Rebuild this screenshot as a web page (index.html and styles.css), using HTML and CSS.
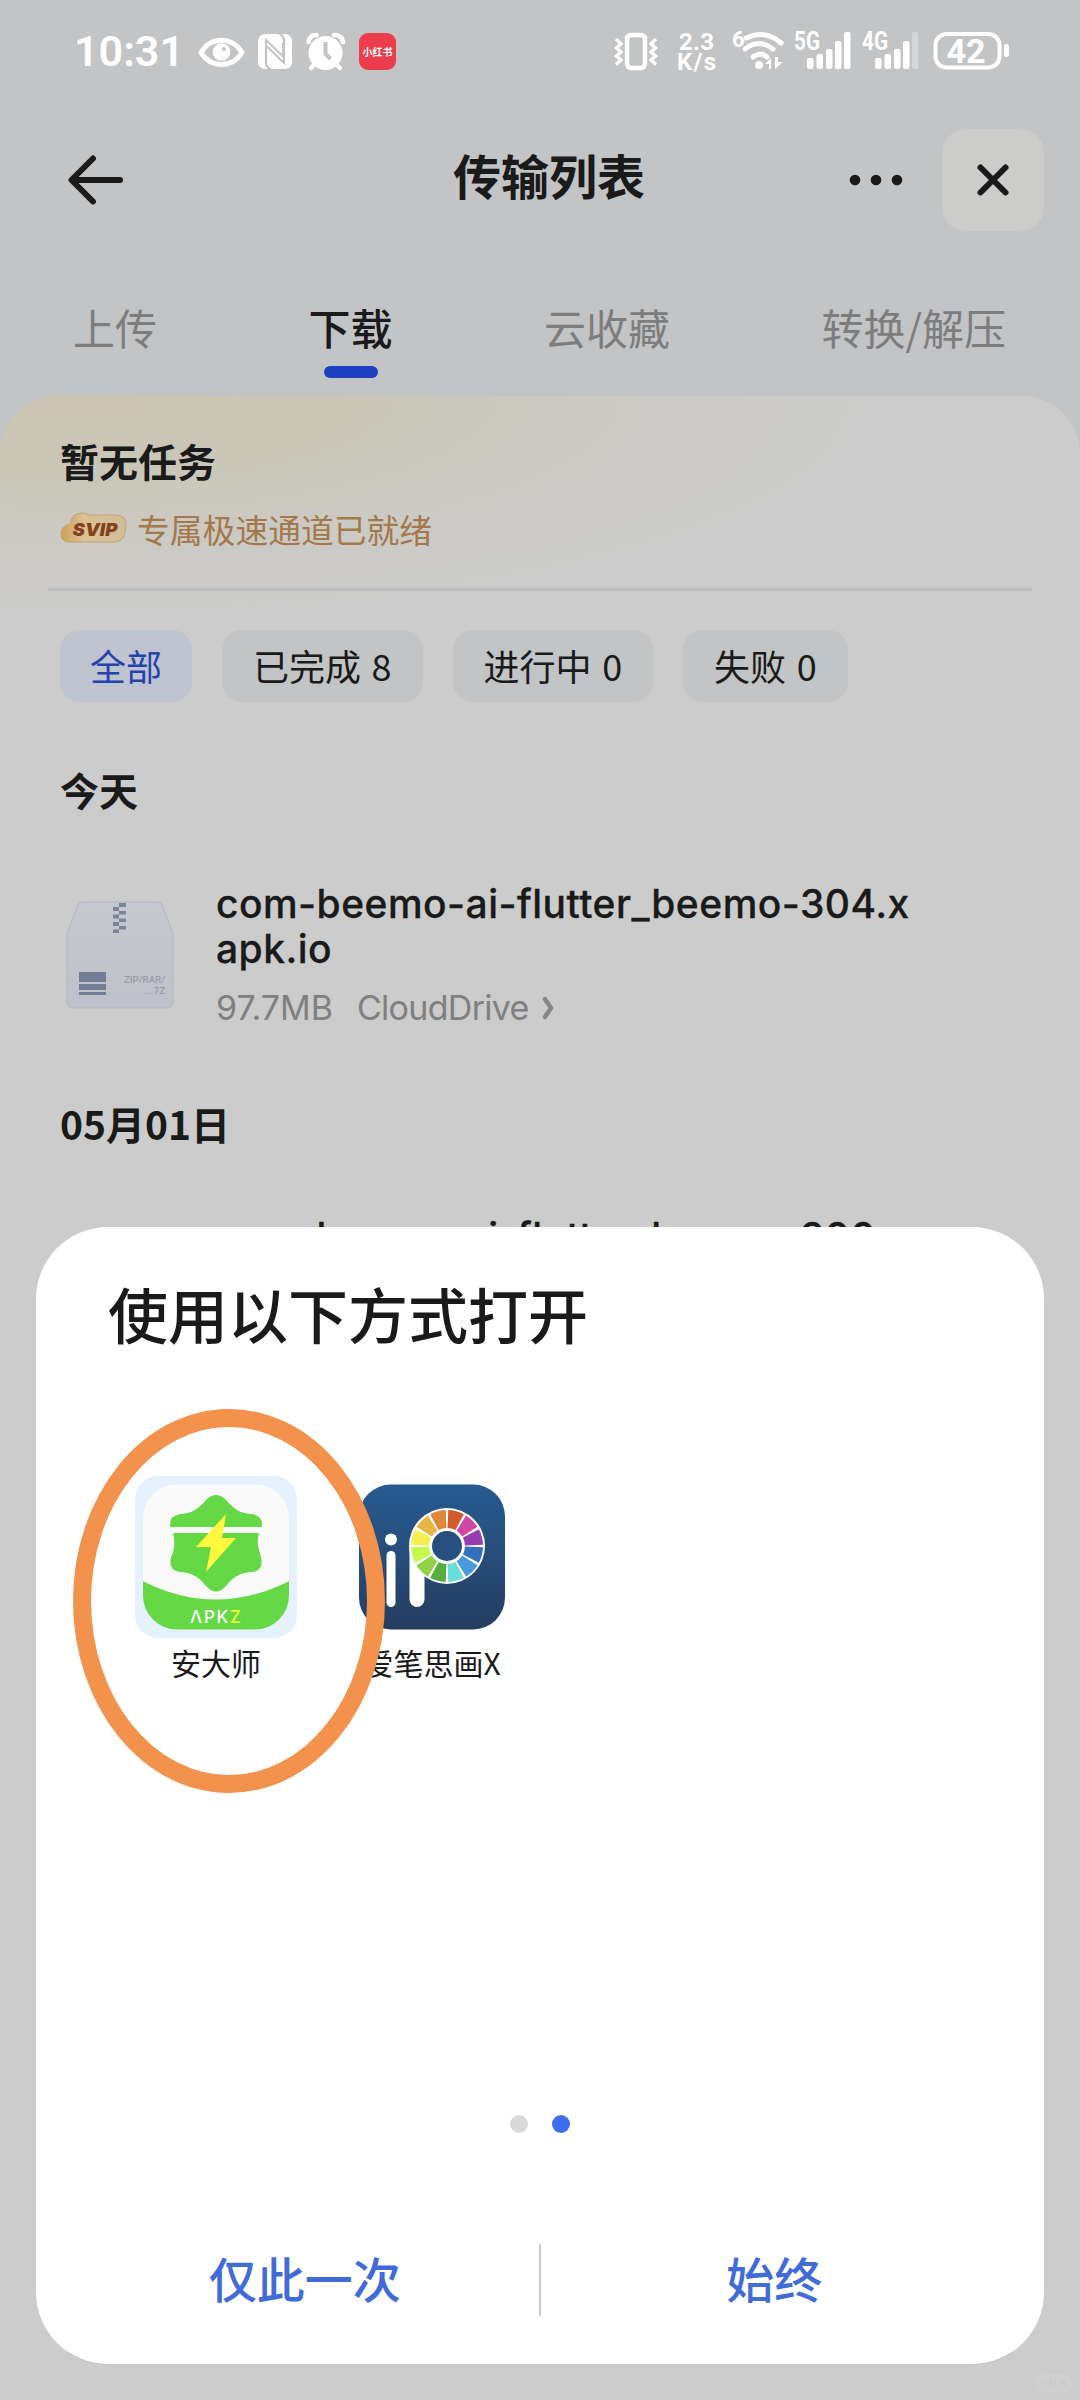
FILE: index.html
```html
<!DOCTYPE html>
<html lang="zh-CN">
<head>
<meta charset="utf-8">
<title>传输列表</title>
<link rel="stylesheet" href="styles.css">
</head>
<body>
<div class="screen">
  <div class="status">
    <span class="time">10:31</span>
    <svg class="status-left" width="200" height="40" viewBox="198 32 200 40">
      <path d="M201 52.500C211 36 232 36 242 52.500C232 68.500 211 68.500 201 52.500Z" fill="none" stroke="#fff" stroke-width="5" stroke-linejoin="round"/>
      <circle cx="221.500" cy="52" r="8.800" fill="#fff"/><circle cx="224" cy="49" r="2" fill="#c3c4c6"/>
      <rect x="258" y="34" width="34" height="35" rx="7" fill="#fff"/>
      <path d="M271 69.500q-5-2-5-7V40l17 16.500V43M279 33.500q5 2 5 7V63L267 46.500" fill="none" stroke="#c3c4c6" stroke-width="2.200"/>
      <circle cx="325.500" cy="53" r="17" fill="#fff"/>
      <path d="M308.500 42q1-7 8-7M334 35q8 0 9 7M315 64l-4 4M336 64l4 4" fill="none" stroke="#fff" stroke-width="4.500" stroke-linecap="round"/>
      <path d="M325.500 42v12l5 5" fill="none" stroke="#c3c4c6" stroke-width="4"/>
      <rect x="359" y="33" width="37" height="37" rx="9" fill="#eb3d4b"/>
      <text x="377.500" y="56" class="xhs">小红书</text>
    </svg>
    <svg class="status-right" width="410" height="44" viewBox="610 28 410 44">
      <g fill="none" stroke="#fff">
        <rect x="627" y="35" width="18" height="33" rx="4" stroke-width="4.500"/>
        <path d="M616 39l5 5-4.500 4 4.500 4-4.500 4 4.500 4-5 4.500M656 39l-5 5 4.500 4-4.500 4 4.500 4-4.500 4 5 4.500" stroke-width="3.500"/>
        <path d="M746 38q19-9 35 5M745 49q14-11 28 0M753 57q8-6 14 0" stroke-width="5" stroke-linecap="round"/>
        <rect x="935.500" y="34" width="64" height="33.500" rx="11" stroke-width="4"/>
      </g>
      <g fill="#fff">
        <text x="696.500" y="50" class="speed" textLength="35">2.3</text><text x="696.500" y="69.500" class="speed" textLength="39">K/s</text>
        <text x="732" y="47" class="gen wifi-gen">6</text>
        <circle cx="759" cy="65" r="4"/>
        <path d="M765 64l6-6v11h-2v-5zM775 57v12l8-7h-5v-5z"/>
        <text x="794" y="50" class="gen" textLength="26" lengthAdjust="spacingAndGlyphs">5G</text>
        <text x="862" y="50" class="gen" textLength="26" lengthAdjust="spacingAndGlyphs">4G</text>
        <rect x="807" y="58" width="6.500" height="11" rx="2"/><rect x="816.500" y="54" width="6.500" height="15" rx="2"/><rect x="826" y="49" width="6.500" height="20" rx="2"/><rect x="835" y="41" width="6.500" height="28" rx="2"/><rect x="844" y="32" width="6.500" height="37" rx="2"/>
        <rect x="875" y="58" width="6.500" height="11" rx="2"/><rect x="884.500" y="54" width="6.500" height="15" rx="2"/><rect x="894" y="49" width="6.500" height="20" rx="2"/><rect x="903" y="41" width="6.500" height="28" rx="2"/><rect x="912" y="32" width="6.500" height="37" rx="2" opacity=".3"/>
        <text x="966" y="62.500" class="battery">42</text>
        <rect x="1004" y="44" width="5" height="13" rx="2.500"/>
      </g>
    </svg>
  </div>

  <header class="header">
    <svg width="56" height="50" viewBox="68 155 56 50"><path d="M120 180H72M93 158.500L71.500 180L93 201.500" fill="none" stroke="#1a1a1a" stroke-width="6" stroke-linecap="round" stroke-linejoin="round"/></svg>
    <h1 class="title">传输列表</h1>
    <div class="actions">
      <svg width="54" height="12" viewBox="0 0 54 12" fill="#1a1a1a"><circle cx="6" cy="6" r="5.300"/><circle cx="27" cy="6" r="5.300"/><circle cx="48" cy="6" r="5.300"/></svg>
      <div class="close"><svg width="34" height="34" viewBox="0 0 34 34"><path d="M4.500 4.500l25 25M29.500 4.500l-25 25" stroke="#1a1a1a" stroke-width="6" stroke-linecap="round"/></svg></div>
    </div>
  </header>

  <nav class="tabs"><span>上传</span><span class="active">下载</span><span>云收藏</span><span>转换/解压</span></nav>

  <main class="card">
    <section class="summary">
      <h2>暂无任务</h2>
      <div class="vip">
        <svg width="68" height="32" viewBox="0 0 68 32">
          <defs><linearGradient id="gold" x1="0" x2="1"><stop offset="0" stop-color="#cfa15a"/><stop offset=".35" stop-color="#dcc195"/><stop offset="1" stop-color="#d0bd98"/></linearGradient></defs>
          <path d="M10 12Q12 1 22 1Q26 1 29 3H56Q67 3 66 14L65 21Q63 30 54 30H10Q1 30 1 22Q1 14 10 12Z" fill="url(#gold)" stroke="#c3a26f"/>
          <text x="35" y="23.500" class="svip" textLength="45" lengthAdjust="spacingAndGlyphs">SVIP</text>
        </svg>
        <span>专属极速通道已就绪</span>
      </div>
    </section>
    <div class="chips"><span class="chip on">全部</span><span class="chip">已完成 8</span><span class="chip">进行中 0</span><span class="chip">失败 0</span></div>
    <h3 class="day">今天</h3>
    <article class="file">
      <svg class="zip" width="108" height="108" viewBox="0 0 108 108">
        <defs><linearGradient id="box" x1="0" y1="0" x2="0" y2="1"><stop offset="0" stop-color="#c6c9ce"/><stop offset=".6" stop-color="#c2c5cb"/><stop offset="1" stop-color="#bec0ca"/></linearGradient></defs>
        <path d="M1 33L12 4Q13 1 17 1H91Q95 1 96 4L107 33V101Q107 107 101 107H7Q1 107 1 101Z" fill="url(#box)" stroke="#b3b8c3"/>
        <path d="M53 2h7v4h-7zM47 6h6v4h-6zM53 10h7v3.500h-7zM47 13.500h6v4h-6zM53 17.500h7v3.500h-7zM47 21h6v4h-6zM53 25h7v3.500h-7zM47 28.500h6v3.500h-6z" fill="#7e839a"/>
        <path d="M13 71h27v10h-27zM13 83h27v6h-27zM13 91h27v3h-27z" fill="#747c96"/>
        <text x="99" y="82" class="ziptext" textLength="41" lengthAdjust="spacingAndGlyphs">ZIP/RAR/</text><text x="99" y="92.500" class="ziptext" textLength="21">...7Z</text>
      </svg>
      <div class="info">
        <div class="name">com-beemo-ai-flutter_beemo-304.x<br>apk.io</div>
        <div class="meta"><span>97.7MB</span><span class="drive">CloudDrive</span><svg width="14" height="26" viewBox="0 0 14 26"><path d="M4 4q6 9 6 9q0 0-6 9" fill="none" stroke="#868686" stroke-width="4.500" stroke-linecap="round" stroke-linejoin="round"/></svg></div>
      </div>
    </article>
    <h3 class="day second">05月01日</h3>
    <article class="file next"><div class="info"><div class="name">com-beemo-ai-flutter_beemo-300.x<br>apk.io</div></div></article>
  </main>

  <div class="sheet-shadow"></div>
  <div class="sheet">
    <h2>使用以下方式打开</h2>
    <div class="apps">
      <div class="app">
        <svg width="162" height="162" viewBox="0 0 162 162">
          <defs><clipPath id="inner"><rect x="8" y="8.500" width="146" height="145" rx="34"/></clipPath></defs>
          <rect width="162" height="162" rx="23" fill="#e7f0fd"/>
          <g clip-path="url(#inner)"><rect width="162" height="162" fill="#fafafa"/><path d="M0 101Q81 146 162 101V162H0Z" fill="#65d845"/></g>
          <path d="M71 24Q81 14 91 24C99 33 106 38 117 38Q127 40 127 48V51H35V48Q35 40 45 38C56 38 63 33 71 24ZM38 57H124C121 67 124 74 126 81Q129 95 117 96C106 96 98 101 91 110Q81 121 71 110C64 101 56 96 45 96Q33 95 36 81C40 74 40 64 38 57Z" fill="#65d845"/>
          <path d="M91 38L61 71H76L71 96L101 62H87Z" fill="#fff93f"/>
          <text x="55" y="147" class="apkz" textLength="51">ΛPK<tspan fill="#f5fa3c">Z</tspan></text>
        </svg>
        <span>安大师</span>
      </div>
      <div class="app">
        <svg width="162" height="162" viewBox="0 0 162 162">
          <defs><linearGradient id="blue" x1="0" y1="0" x2="0" y2="1"><stop offset="0" stop-color="#265b91"/><stop offset=".5" stop-color="#264d7a"/><stop offset="1" stop-color="#253c5e"/></linearGradient></defs>
          <rect x="8" y="8.500" width="146" height="145" rx="32" fill="url(#blue)"/>
          <circle cx="40" cy="63.500" r="6" fill="#fff"/><rect x="35.500" y="75" width="9" height="56" rx="4.500" fill="#fff"/>
          <path d="M58.500 70V123.500a7.500 7.500 0 0 0 15 0V95Z" fill="#fff"/>
          <circle cx="96" cy="70" r="38" fill="#fff"/>
          <g fill="none" stroke-width="18" transform="rotate(-90 96 70)">
            <circle cx="96" cy="70" r="27" stroke="#d35b29" pathLength="12" stroke-dasharray=".86 11.140" stroke-dashoffset="-.07"/>
            <circle cx="96" cy="70" r="27" stroke="#cf46a4" pathLength="12" stroke-dasharray=".86 11.140" stroke-dashoffset="-1.070"/>
            <circle cx="96" cy="70" r="27" stroke="#963caf" pathLength="12" stroke-dasharray=".86 11.140" stroke-dashoffset="-2.070"/>
            <circle cx="96" cy="70" r="27" stroke="#346fb9" pathLength="12" stroke-dasharray=".86 11.140" stroke-dashoffset="-3.070"/>
            <circle cx="96" cy="70" r="27" stroke="#4a99dc" pathLength="12" stroke-dasharray=".86 11.140" stroke-dashoffset="-4.070"/>
            <circle cx="96" cy="70" r="27" stroke="#6adcd9" pathLength="12" stroke-dasharray=".86 11.140" stroke-dashoffset="-5.070"/>
            <circle cx="96" cy="70" r="27" stroke="#56ae3e" pathLength="12" stroke-dasharray=".86 11.140" stroke-dashoffset="-6.070"/>
            <circle cx="96" cy="70" r="27" stroke="#92d247" pathLength="12" stroke-dasharray=".86 11.140" stroke-dashoffset="-7.070"/>
            <circle cx="96" cy="70" r="27" stroke="#c3fa4b" pathLength="12" stroke-dasharray=".86 11.140" stroke-dashoffset="-8.070"/>
            <circle cx="96" cy="70" r="27" stroke="#f3ef51" pathLength="12" stroke-dasharray=".86 11.140" stroke-dashoffset="-9.070"/>
            <circle cx="96" cy="70" r="27" stroke="#e9b645" pathLength="12" stroke-dasharray=".86 11.140" stroke-dashoffset="-10.070"/>
            <circle cx="96" cy="70" r="27" stroke="#e1873a" pathLength="12" stroke-dasharray=".86 11.140" stroke-dashoffset="-11.070"/>
          </g>
          <circle cx="96" cy="70" r="16" fill="#264f7e" stroke="#fff" stroke-width="2"/>
        </svg>
        <span>爱笔思画X</span>
      </div>
    </div>
    <div class="dots"><i></i><i class="on"></i></div>
    <div class="buttons"><span>仅此一次</span><b></b><span>始终</span></div>
  </div>
  <div class="ring"></div>
  <div class="watermark">小红书</div>
</div>
</body>
</html>
```
FILE: styles.css
```css
* { box-sizing: border-box; margin: 0; padding: 0; }
body { font-family: "Noto Sans CJK SC", sans-serif; color: #1a1a1a; }
.screen { position: relative; width: 1080px; height: 2400px; overflow: hidden; background: #c3c4c6; }
svg { display: block; flex: none; }

.status { height: 110px; padding: 0 60px 0 74px; display: flex; align-items: flex-start; }
.time { width: 124px; margin-top: 25px; font: 600 43px/52px Roboto, sans-serif; color: #fff; white-space: nowrap; }
.status-left { margin-top: 32px; }
.status-right { margin: 28px 0 0 212px; }
.xhs { font: 700 10px "Noto Sans CJK SC", sans-serif; fill: #fff; text-anchor: middle; }
.speed { font: 700 24px Roboto, sans-serif; text-anchor: middle; }
.gen { font: 700 25px Roboto, sans-serif; }
.gen.wifi-gen { font-size: 22px; }
.battery { font: 700 34px Roboto, sans-serif; text-anchor: middle; }

.header { height: 140px; padding: 0 36px 0 68px; display: grid; grid-template-columns: 300px 1fr 300px; align-items: center; }
.title { font-size: 48px; font-weight: 700; line-height: 60px; text-align: center; margin: -12px 0 0 -14px; }
.actions { display: flex; align-items: center; justify-content: flex-end; gap: 39px; }
.close { width: 102px; height: 102px; border-radius: 24px; background: #cccccb; display: flex; align-items: center; justify-content: center; }

.tabs { height: 146px; padding: 47px 74px 0 73px; display: flex; justify-content: space-between; font-size: 42px; line-height: 60px; color: #7d7d7e; }
.tabs .active { color: #1a1a1a; font-weight: 500; display: flex; flex-direction: column; align-items: center; }
.tabs .active::after { content: ""; width: 54px; height: 12px; margin-top: 9px; border-radius: 6px; background: #1d40c2; }

.card { height: 2004px; padding: 0 48px; border-radius: 58px 58px 0 0; background: radial-gradient(ellipse 820px 230px at 90px 0, #cdc5b2 0, #cac7b8 30%, #cccac5 65%, #cccccc 100%) #ccc; }
.summary { height: 195px; padding: 36px 12px 0; border-bottom: 3px solid #bdbdbd; }
.summary h2, .day { font-size: 39px; font-weight: 700; line-height: 56px; }
.vip { margin-top: 17px; display: flex; align-items: center; gap: 9px; font-size: 32.800px; line-height: 48px; color: #a3794a; }
.vip svg { margin-top: -3px; }
.svip { font: italic 900 18px Inter, sans-serif; fill: #85411b; text-anchor: middle; }
.chips { display: flex; gap: 30px; padding: 39px 12px 0; }
.chip { height: 72px; padding: 0 31px; border-radius: 20px; background: #c2c4c6; font-size: 36px; line-height: 70px; word-spacing: 2.500px; }
.chip.on { padding: 0 30px; background: #c0c4d1; color: #2543ac; }
.day { margin: 59px 12px 0; }
.file { display: flex; gap: 42px; padding: 0 0 0 18px; margin-top: 64px; }
.zip { margin-top: 20px; }
.ziptext { font: 500 9px Roboto, sans-serif; fill: #999ca5; text-anchor: end; }
.name { font: 500 39px/45px Inter, sans-serif; letter-spacing: .470px; -webkit-text-stroke: .3px #1a1a1a; white-space: nowrap; }
.meta { display: flex; align-items: center; margin-top: 14px; font: 400 34px/45px Inter, sans-serif; color: #808080; }
.drive { margin: 0 12px 0 24px; letter-spacing: -.7px; }
.day.second { margin-top: 65px; }
.file.next { margin-top: 63px; padding-left: 168px; }

.sheet-shadow { position: absolute; left: 48px; top: 2270px; width: 984px; height: 94px; border-radius: 0 0 54px 54px; background: #c4c0bd; }
.sheet { position: absolute; left: 36px; top: 1227px; width: 1008px; height: 1137px; border-radius: 72px; background: #fff; display: flex; flex-direction: column; }
.sheet h2 { margin: 42px 0 0 72px; font-size: 60px; font-weight: 500; line-height: 88px; }
.apps { display: flex; margin: 119px 0 0 72px; }
.app { width: 216px; display: flex; flex-direction: column; align-items: center; font-size: 30px; line-height: 44px; }
.app span { margin-top: 2px; }
.apkz { font: 500 17px Inter, sans-serif; fill: #fff; }
.dots { display: flex; justify-content: center; gap: 24px; margin-top: 431px; }
.dots i { width: 18px; height: 18px; border-radius: 50%; background: #d9d9d9; }
.dots .on { background: #3e6df0; }
.buttons { display: flex; align-items: center; margin-top: 111px; height: 72px; font-size: 48px; font-weight: 500; color: #416bd9; text-align: center; }
.buttons span { flex: 1 1 0; height: 72px; padding-left: 35px; line-height: 66px; }
.buttons span:last-child { padding: 0 36px 0 0; }
.buttons b { width: 2px; height: 72px; background: #ccc; }
.ring { position: absolute; left: 73px; top: 1409px; width: 312px; height: 384px; border: 18px solid #f2924c; border-radius: 50%; }
.watermark { position: absolute; left: 1035px; top: 2374px; width: 37px; height: 18px; border-radius: 9px; background: #cfcfcf; color: #c8c8c8; font-size: 9px; line-height: 18px; text-align: center; }
```
